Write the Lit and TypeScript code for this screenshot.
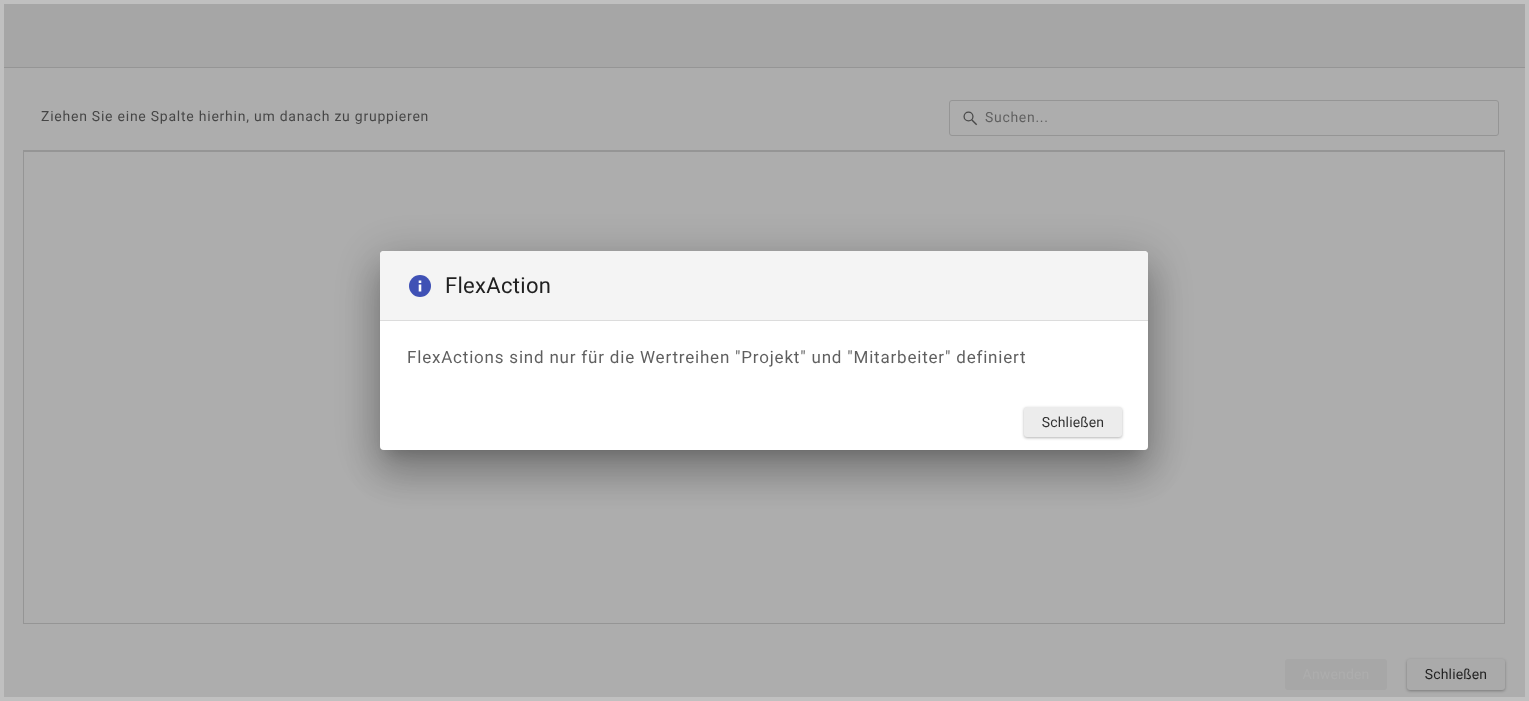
import { LitElement, html, css } from "lit";
import { customElement } from "lit/decorators.js";

@customElement("app-root")
export class AppRoot extends LitElement {
  static styles = css`
    :host {
      display: block;
      width: 1529px;
      height: 701px;
      box-sizing: border-box;
      border: 4px solid #c0c0c0;
      font-family: Roboto, "Liberation Sans", sans-serif;
      text-rendering: geometricPrecision;
      background: #fff;
      overflow: hidden;
    }
    .page {
      position: relative;
      display: flex;
      flex-direction: column;
      height: 100%;
    }
    .top {
      height: 63px;
      flex: none;
      background: #f5f5f5;
      border-bottom: 1px solid #dcdcdc;
    }
    .body {
      flex: 1;
      display: flex;
      flex-direction: column;
      padding: 32px 20px 7px 19px;
      min-height: 0;
    }
    .tools {
      display: flex;
      justify-content: space-between;
      flex: none;
      height: 36px;
      margin-bottom: 14px;
    }
    .hint {
      margin: 8px 0 0 18px;
      font-size: 14px;
      line-height: 18px;
      letter-spacing: 0.76px;
      color: rgba(0, 0, 0, 0.6);
      will-change: opacity;
    }
    .search {
      box-sizing: border-box;
      width: 550px;
      height: 36px;
      margin-right: 6px;
      display: flex;
      align-items: center;
      gap: 5px;
      padding-left: 11px;
      border: 1px solid #dcdcdc;
      border-radius: 3px;
      font-size: 14px;
      letter-spacing: 0.7px;
    }
    .search svg {
      width: 19px;
      height: 19px;
      flex: none;
      fill: none;
      stroke: rgba(0, 0, 0, 0.58);
    }
    .search span {
      color: rgba(0, 0, 0, 0.45);
      will-change: opacity;
    }
    .grid {
      flex: none;
      height: 474px;
      box-sizing: border-box;
      border: 1px solid #dcdcdc;
      border-top: 2px solid #dcdcdc;
    }
    .actions {
      display: flex;
      justify-content: flex-end;
      gap: 20px;
      margin-top: 35px;
    }
    button {
      font-family: inherit;
      font-size: 14px;
      letter-spacing: 0.15px;
      text-rendering: inherit;
      height: 31px;
      padding: 0;
      border: none;
      border-radius: 3px;
      color: rgba(0, 0, 0, 0.8);
    }
    button span {
      display: block;
      margin-top: 1px;
      will-change: opacity;
    }
    .close {
      width: 98px;
      background: #fbfbfb;
      box-shadow: 0 1px 3px rgba(0, 0, 0, 0.3);
    }
    .foot .close {
      height: 30px;
      background: #ececec;
    }
    .apply {
      width: 102px;
      background: #f6f6f6;
      color: #fff;
    }
    .overlay {
      position: absolute;
      inset: 0;
      padding-right: 1px;
      background: rgba(0, 0, 0, 0.32);
      display: flex;
      align-items: center;
      justify-content: center;
    }
    .dialog {
      width: 768px;
      height: 199px;
      background: #fff;
      border-radius: 4px;
      display: flex;
      flex-direction: column;
      overflow: hidden;
    }
    .shadow {
      border-radius: 4px;
      box-shadow: 0 11px 15px -7px rgba(0, 0, 0, 0.16),
        0 24px 38px 3px rgba(0, 0, 0, 0.19),
        0 9px 46px 8px rgba(0, 0, 0, 0.17);
    }
    .head {
      flex: none;
      height: 70px;
      box-sizing: border-box;
      background: #f4f4f4;
      border-bottom: 1px solid #dcdcdc;
      display: flex;
      align-items: center;
      gap: 13px;
      padding-left: 28px;
      font-size: 22px;
      font-weight: 400;
      letter-spacing: 0.3px;
      color: rgba(0, 0, 0, 0.87);
    }
    .head svg {
      width: 24px;
      height: 24px;
      flex: none;
    }
    .head span {
      margin-top: 2px;
      will-change: opacity;
    }
    .msg {
      margin: 0;
      padding: 27px 27px 0;
      font-size: 17px;
      line-height: 20px;
      letter-spacing: 0.8px;
      color: rgba(0, 0, 0, 0.63);
      flex: 1;
      will-change: opacity;
    }
    .foot {
      display: flex;
      justify-content: flex-end;
      padding: 0 26px 13px 0;
    }
  `;

  render() {
    return html`
      <div class="page">
        <div class="top"></div>
        <div class="body">
          <div class="tools">
            <div class="hint">Ziehen Sie eine Spalte hierhin, um danach zu gruppieren</div>
            <div class="search">
              <svg viewBox="0 0 24 24"><circle cx="9.5" cy="9.5" r="5.6" stroke-width="1.6"/><path d="M13.800 13.800l6 6" stroke-width="1.800"/></svg>
              <span>Suchen...</span>
            </div>
          </div>
          <div class="grid"></div>
          <div class="actions">
            <button class="apply"><span>Anwenden</span></button>
            <button class="close"><span>Schließen</span></button>
          </div>
        </div>
        <div class="overlay">
          <div class="shadow">
            <div class="dialog">
              <div class="head">
                <svg viewBox="0 0 24 24"><path fill="#3f51b5" d="M12 1a11 11 0 1 0 0 22 11 11 0 0 0 0-22z"/><path fill="#fff" d="M10.700 10.500h2.600v7h-2.600zM10.700 6.500h2.600v2.500h-2.600z"/></svg>
                <span>FlexAction</span>
              </div>
              <p class="msg">FlexActions sind nur für die Wertreihen "Projekt" und "Mitarbeiter" definiert</p>
              <div class="foot"><button class="close"><span>Schließen</span></button></div>
            </div>
          </div>
        </div>
      </div>
    `;
  }
}
